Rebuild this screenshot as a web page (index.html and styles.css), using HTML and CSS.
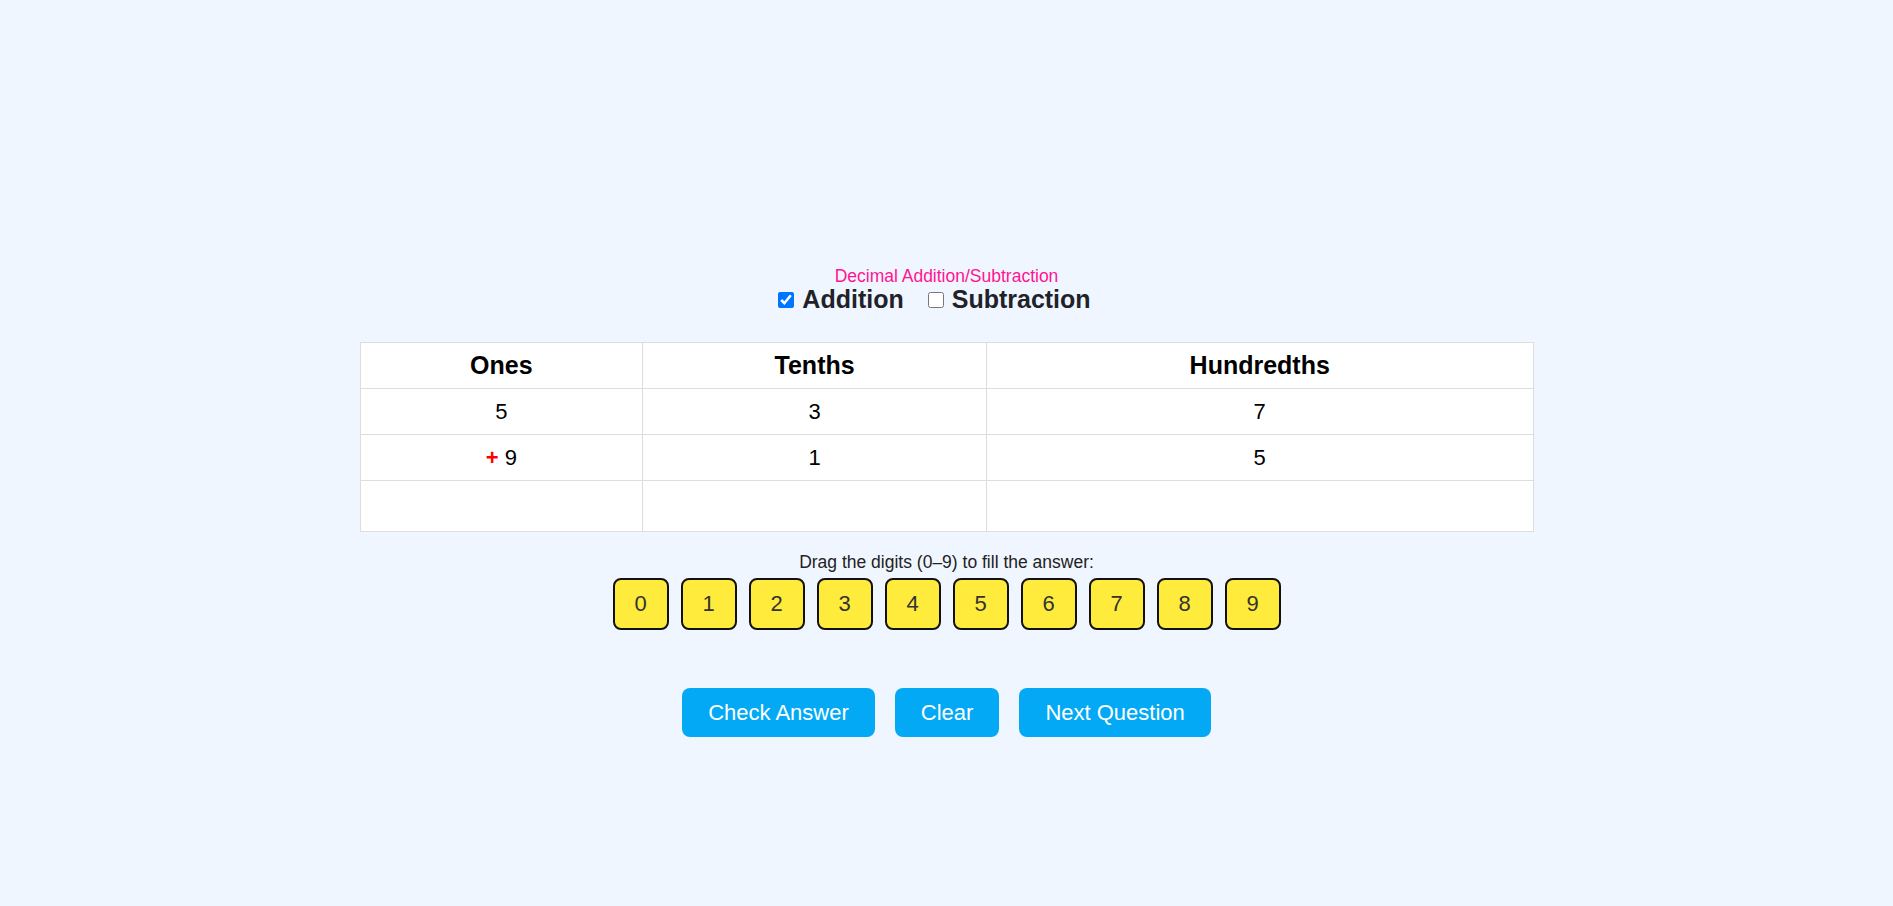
FILE: index.html
```html
<!DOCTYPE html>
<html lang="en">
<head>
<meta charset="UTF-8">
<meta name="viewport" content="width=device-width, initial-scale=1.0">
<title>Decimal Addition/Subtraction</title>
<link rel="stylesheet" href="styles.css">
</head>
<body>
<div class="app">
  <div class="title">Decimal Addition/Subtraction</div>
  <div class="modes">
    <label><input type="checkbox" id="addition" checked> Addition</label>
    <label><input type="checkbox" id="subtraction"> Subtraction</label>
  </div>

  <table class="place-table">
    <colgroup>
      <col class="col-ones">
      <col class="col-tenths">
      <col class="col-hundredths">
    </colgroup>
    <tr>
      <th>Ones</th>
      <th>Tenths</th>
      <th>Hundredths</th>
    </tr>
    <tr>
      <td>5</td>
      <td>3</td>
      <td>7</td>
    </tr>
    <tr>
      <td><span class="op">+</span> 9</td>
      <td>1</td>
      <td>5</td>
    </tr>
    <tr class="answer-row">
      <td></td>
      <td></td>
      <td></td>
    </tr>
  </table>

  <div class="hint">Drag the digits (0–9) to fill the answer:</div>
  <div class="digits">
    <div class="digit">0</div>
    <div class="digit">1</div>
    <div class="digit">2</div>
    <div class="digit">3</div>
    <div class="digit">4</div>
    <div class="digit">5</div>
    <div class="digit">6</div>
    <div class="digit">7</div>
    <div class="digit">8</div>
    <div class="digit">9</div>
  </div>

  <div class="actions">
    <button class="btn">Check Answer</button>
    <button class="btn">Clear</button>
    <button class="btn">Next Question</button>
  </div>
</div>
</body>
</html>
```

FILE: styles.css
```css
body {
  margin: 0;
  background-color: #f0f6ff;
  font-family: "Liberation Sans", Arial, sans-serif;
  color: #222;
}
.app {
  padding-top: 267px;
  text-align: center;
}
.title {
  font-size: 17.5px;
  line-height: 19px;
  color: #ff1493;
}
.modes {
  display: flex;
  justify-content: center;
  font-size: 25px;
  font-weight: bold;
  line-height: 27px;
  color: #1f2228;
}
.modes label {
  display: flex;
  align-items: center;
  margin-right: 24px;
}
.modes input {
  width: 16px;
  height: 16px;
  margin: 0 8px 0 0;
}
.place-table {
  width: 1174px;
  margin: 29px auto 0;
  border-collapse: collapse;
  background-color: #fff;
}
.col-ones { width: 283px; }
.col-tenths { width: 344px; }
.col-hundredths { width: 547px; }
.place-table th,
.place-table td {
  border: 1px solid #dddddd;
  height: 45px;
  padding: 0;
  color: #000;
}
.place-table th {
  font-size: 25px;
}
.place-table td {
  font-size: 22px;
}
.place-table .answer-row td {
  height: 50px;
}
.op {
  color: #ff0000;
  font-weight: bold;
}
.hint {
  margin-top: 21px;
  font-size: 17.5px;
  line-height: 19px;
  color: #222;
}
.digits {
  display: flex;
  justify-content: center;
  gap: 12px;
  margin-top: 6px;
}
.digit {
  width: 52px;
  height: 48px;
  line-height: 48px;
  background-color: #ffeb3b;
  border: 2px solid #111;
  border-radius: 8px;
  font-size: 22px;
  color: #333;
}
.actions {
  display: flex;
  justify-content: center;
  gap: 20px;
  margin-top: 58px;
}
.btn {
  font-family: "Liberation Sans", Arial, sans-serif;
  font-size: 22px;
  line-height: 25px;
  padding: 12px 26px;
  border: none;
  border-radius: 8px;
  background-color: #03a9f4;
  color: #fff;
}
```
